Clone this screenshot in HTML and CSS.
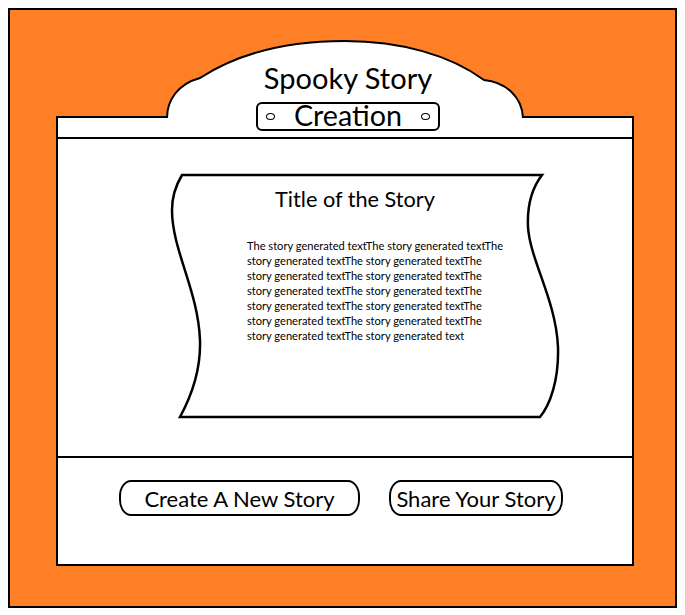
FILE: index.html
```html
<!DOCTYPE html>
<html lang="en">
<head>
  <meta charset="UTF-8">
  <title>Spooky Story Creation</title>
  <meta name="viewport" content="width=device-width, initial-scale=1.0">
  <link rel="stylesheet" href="styles.css">
</head>
<body>

  <div class="frame">
    <div class="panel">

      <header class="head">
        <div class="crest">
          <svg class="crest-bg" viewBox="162 36 372 101" width="372" height="101">
            <path class="crest-fill" d="M167,137 L167,118 C167,100 178,84 200,78 C240,52 290,41 345,41 C400,41 450,55 484,80 C505,82 522,96 523,118 L523,137 Z"/>
            <path class="crest-line" d="M167,118 C167,100 178,84 200,78 C240,52 290,41 345,41 C400,41 450,55 484,80 C505,82 522,96 523,118"/>
          </svg>
          <h1 class="crest-title">Spooky Story</h1>
          <div class="plaque">
            <span class="rivet"></span>
            <span class="plaque-text">Creation</span>
            <span class="rivet"></span>
          </div>
        </div>
      </header>

      <main class="stage">
        <section class="scroll">
          <svg class="scroll-bg" viewBox="170 173 390 247" width="390" height="247">
            <path d="M182,175 L542,175 C532,188 527,205 528,227 C530,260 556,300 558,347 C559,380 550,405 540,417 L180,417 C192,395 201,370 200,340 C198,290 172,250 172,210 C172,195 176,185 182,175 Z"/>
          </svg>
          <h2 class="story-title">Title of the Story</h2>
          <p class="story-text">The story generated textThe story generated textThe story generated textThe story generated textThe story generated textThe story generated textThe story generated textThe story generated textThe story generated textThe story generated textThe story generated textThe story generated textThe story generated textThe story generated text</p>
        </section>
      </main>

      <footer class="actions">
        <button class="btn btn-new">Create A New Story</button>
        <button class="btn btn-share">Share Your Story</button>
      </footer>

    </div>
  </div>

</body>
</html>
```

FILE: styles.css
```css
:root {
  --orange: #ff7f27;
  --ink: #000;
  --paper: #fff;
}

body {
  margin: 8px;
  font-family: Lato, "Liberation Sans", sans-serif;
  color: var(--ink);
  background: var(--paper);
}

.frame {
  box-sizing: border-box;
  width: 669px;
  height: 600px;
  background: var(--orange);
  border: 2px solid var(--ink);
  padding: 106px 41px 40px 46px;
}

.panel {
  box-sizing: border-box;
  width: 578px;
  height: 450px;
  background: var(--paper);
  border: 2px solid var(--ink);
  display: flex;
  flex-direction: column;
}

/* header strip with the arched crest */
.head {
  position: relative;
  height: 19px;
  border-bottom: 2px solid var(--ink);
}

.crest {
  position: absolute;
  left: 104px;
  top: -82px;
  width: 372px;
  height: 101px;
  display: flex;
  flex-direction: column;
  align-items: center;
  padding-top: 24px;
  box-sizing: border-box;
}

.crest-bg {
  position: absolute;
  left: 0;
  top: 0;
}

.crest-fill {
  fill: var(--paper);
}

.crest-line {
  fill: none;
  stroke: var(--ink);
  stroke-width: 2;
}

.crest-title {
  position: relative;
  margin: 0;
  font-size: 29px;
  font-weight: normal;
  line-height: normal;
}

.plaque {
  position: relative;
  box-sizing: border-box;
  width: 184px;
  height: 29px;
  margin-top: 7px;
  border: 2px solid var(--ink);
  border-radius: 6px;
  display: flex;
  align-items: center;
  justify-content: space-between;
  padding: 0 8px;
}

.plaque-text {
  font-size: 28.7px;
  line-height: 22px;
  padding-bottom: 3px;
}

.rivet {
  width: 7px;
  height: 5px;
  border: 1.5px solid var(--ink);
  border-radius: 50%;
}

/* story area */
.stage {
  flex: 1;
  border-bottom: 2px solid var(--ink);
}

.scroll {
  position: relative;
  width: 390px;
  height: 247px;
  margin: 34px 0 0 112px;
  padding-top: 13px;
  box-sizing: border-box;
}

.scroll-bg {
  position: absolute;
  left: 0;
  top: 0;
}

.scroll-bg path {
  fill: var(--paper);
  stroke: var(--ink);
  stroke-width: 2.5;
}

.story-title {
  position: relative;
  margin: 0;
  padding-right: 20px;
  text-align: center;
  font-size: 21.7px;
  font-weight: normal;
  line-height: normal;
}

.story-text {
  position: relative;
  width: 258px;
  margin: 26px 0 0 77px;
  font-size: 11.1px;
  line-height: 15px;
}

/* buttons */
.actions {
  height: 106px;
  box-sizing: border-box;
  padding: 22px 0 0 61px;
  display: flex;
  align-items: flex-start;
  gap: 29px;
}

.btn {
  box-sizing: border-box;
  height: 36px;
  padding: 0;
  background: var(--paper);
  color: var(--ink);
  border: 2px solid var(--ink);
  border-radius: 12px / 16px;
  font-family: inherit;
  font-size: 22px;
}

.btn-new {
  width: 241px;
}

.btn-share {
  width: 174px;
}
```
